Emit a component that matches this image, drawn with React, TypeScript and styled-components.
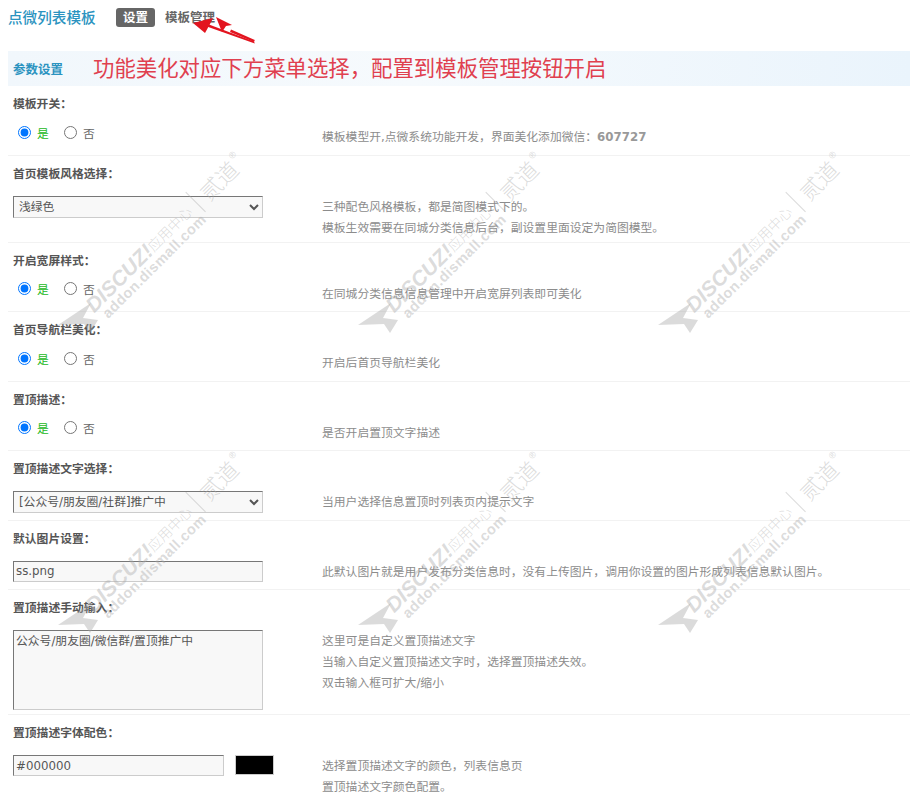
import React from "react";
import styled, { createGlobalStyle } from "styled-components";

const GlobalStyle = createGlobalStyle`
    html, body {
        margin: 0;
        padding: 0;
        background: #fff;
        overflow: hidden;
    }
    body {
        font-family: "DejaVu Sans", "Noto Sans CJK SC", sans-serif;
        font-size: 11.8px;
        color: #555;
    }
`

const Page = styled.div`
    position: relative;
    width: 910px;
    height: 795px;
    overflow: hidden;
    padding-left: 8px;
    box-sizing: border-box;
`

const Header = styled.div`
    height: 51px;
    display: flex;
    align-items: flex-start;
    padding-top: 8px;
    box-sizing: border-box;
`

const PageTitle = styled.h1`
    margin: 0 20px 0 0;
    font-size: 14.6px;
    line-height: 20px;
    font-weight: 500;
    color: #2b93c0;
    width: 88px;
    white-space: nowrap;
`

const Tab = styled.a<{ $active?: boolean }>`
    display: block;
    height: 19px;
    line-height: 19px;
    padding: 0 7px;
    margin-right: 3px;
    border-radius: 3px;
    font-size: 12.5px;
    font-weight: bold;
    color: ${props => (props.$active ? "#fff" : "#666")};
    background: ${props => (props.$active ? "#666" : "transparent")};
`

const SectionBar = styled.div`
    height: 35px;
    display: flex;
    align-items: center;
    padding-left: 5px;
    background: linear-gradient(90deg, #f1f7fc 0%, #f6fafd 45%, #eaf4fc 100%);
`

const SectionTitle = styled.span`
    width: 80px;
    font-size: 12.5px;
    font-weight: bold;
    color: #2b93c0;
`

const Notice = styled.span`
    font-size: 21.4px;
    line-height: 30px;
    color: #e0404f;
    white-space: nowrap;
`

const Row = styled.div`
    min-height: 69.5px;
    padding: 0 0 4px 5px;
    box-sizing: border-box;
    border-bottom: 1px solid #f2f2f2;
`

const Label = styled.div`
    height: 34px;
    line-height: 36px;
    font-weight: bold;
    color: #555;
`

const Body = styled.div`
    display: grid;
    grid-template-columns: 309px 1fr;
`

const Control = styled.div<{ $pad?: number }>`
    display: flex;
    align-items: flex-start;
    padding-top: ${props => props.$pad ?? 6}px;
`

const Desc = styled.div`
    padding-top: 7px;
    margin-bottom: -1px;
    line-height: 21px;
    color: #8c8c8c;
    white-space: nowrap;
`

const Strong = styled.b`
    font-weight: bold;
    color: #999;
`

const RadioGroup = styled.div`
    display: flex;
    align-items: center;
    height: 24px;
    padding-left: 5px;
`

const RadioLabel = styled.label<{ $green?: boolean }>`
    display: flex;
    align-items: center;
    width: 46px;
    font-size: 11.8px;
    color: ${props => (props.$green ? "#22b822" : "#666")};
`

const Radio = styled.input`
    width: 13px;
    height: 13px;
    margin: 0 6px 0 0;
`

const fieldBorder = `
    border-width: 1px;
    border-style: solid;
    border-color: #777 #ccc #ccc #777;
    background-color: #f8f8f8;
    box-sizing: border-box;
    font-family: "DejaVu Sans", "Noto Sans CJK SC", sans-serif;
    font-size: 11.8px;
    color: #555;
    outline: none;
`

const Select = styled.select`
    ${fieldBorder}
    width: 250px;
    height: 22px;
    padding-left: 1px;
`

const TextInput = styled.input<{ $width?: number }>`
    ${fieldBorder}
    width: ${props => props.$width ?? 250}px;
    height: 21px;
    padding: 0 2px;
`

const TextArea = styled.textarea`
    ${fieldBorder}
    display: block;
    width: 250px;
    height: 80px;
    padding: 2px;
    resize: none;
    line-height: 16px;
`

const Swatch = styled.div`
    width: 39px;
    height: 20px;
    margin-left: 11px;
    background: #000;
    border: 1px solid #ccc;
    box-sizing: border-box;
`

const Annotation = styled.svg`
    position: absolute;
    left: 180px;
    top: 8px;
`

const WatermarkLayer = styled.div`
    position: absolute;
    left: 58px;
    top: 150px;
    display: grid;
    grid-template-columns: repeat(3, 300px);
    grid-auto-rows: 300px;
    pointer-events: none;
`

const Tile = styled.div`
    position: relative;
    color: rgba(170, 170, 170, 0.42);
`

const TileIcon = styled.svg`
    position: absolute;
    left: 0;
    top: 150px;
`

const TileText = styled.div`
    position: absolute;
    left: 22px;
    top: 145px;
    transform: rotate(-45deg);
    transform-origin: 0 0;
    white-space: nowrap;
`

const BrandLine = styled.div`
    display: flex;
    align-items: center;
    height: 24px;
    margin-top: 4px;
`

const BrandName = styled.span`
    font-family: "Liberation Sans", sans-serif;
    font-size: 21px;
    font-style: italic;
    font-weight: bold;
    margin-left: -3px;
`

const BrandSub = styled.span`
    font-family: "Noto Sans CJK SC", sans-serif;
    font-size: 14px;
    font-weight: 300;
`

const BrandDivider = styled.span`
    width: 1px;
    height: 28px;
    margin: 0 9px;
    background: currentColor;
`

const BrandMark = styled.span`
    font-family: "Noto Sans CJK SC", sans-serif;
    font-size: 22px;
    font-weight: 300;
`

const Registered = styled.sup`
    font-size: 9px;
    align-self: flex-start;
    margin-left: 1px;
`

const Domain = styled.div`
    font-family: "Liberation Sans", sans-serif;
    font-size: 14.5px;
    font-weight: bold;
    letter-spacing: 0.5px;
    line-height: 17px;
    padding-left: 3px;
    margin-top: -4px;
`

const SettingRow = (props: { label: string; control: React.ReactNode; pad?: number; desc: React.ReactNode }) => {
    return (
        <Row>
            <Label>{props.label}</Label>
            <Body>
                <Control $pad={props.pad}>{props.control}</Control>
                <Desc>{props.desc}</Desc>
            </Body>
        </Row>
    );
}

const YesNo = (props: { name: string }) => {
    return (
        <RadioGroup>
            <RadioLabel $green>
                <Radio type="radio" name={props.name} defaultChecked />是
            </RadioLabel>
            <RadioLabel>
                <Radio type="radio" name={props.name} />否
            </RadioLabel>
        </RadioGroup>
    );
}

const Watermark = () => {
    return (
        <Tile>
            <TileIcon width="42" height="34" viewBox="0 0 42 34">
                <path d="M0 25 L33 3 L25 18 L40 20 L32 33 L26 24 Z" fill="currentColor" />
            </TileIcon>
            <TileText>
                <BrandLine>
                    <BrandName>DISCUZ!</BrandName>
                    <BrandSub>应用中心</BrandSub>
                    <BrandDivider />
                    <BrandMark>贰道</BrandMark>
                    <Registered>®</Registered>
                </BrandLine>
                <Domain>addon.dismall.com</Domain>
            </TileText>
        </Tile>
    );
}

const App = () => {
    return (
        <Page>
            <GlobalStyle />
            <Header>
                <PageTitle>点微列表模板</PageTitle>
                <Tab $active>设置</Tab>
                <Tab>模板管理</Tab>
            </Header>
            <SectionBar>
                <SectionTitle>参数设置</SectionTitle>
                <Notice>功能美化对应下方菜单选择&#xFF0C;配置到模板管理按钮开启</Notice>
            </SectionBar>

            <SettingRow
                label="模板开关&#xFF1A;"
                pad={0}
                control={<YesNo name="tpl" />}
                desc={<>模板模型开,点微系统功能开发&#xFF0C;界面美化添加微信&#xFF1A;<Strong>607727</Strong></>}
            />
            <SettingRow
                label="首页模板风格选择&#xFF1A;"
                control={<Select defaultValue="green"><option value="green">浅绿色</option></Select>}
                desc={<>三种配色风格模板&#xFF0C;都是简图模式下的。<br />模板生效需要在同城分类信息后台&#xFF0C;副设置里面设定为简图模型。</>}
            />
            <SettingRow
                label="开启宽屏样式&#xFF1A;"
                pad={0}
                control={<YesNo name="wide" />}
                desc="在同城分类信息信息管理中开启宽屏列表即可美化"
            />
            <SettingRow
                label="首页导航栏美化&#xFF1A;"
                pad={0}
                control={<YesNo name="nav" />}
                desc="开启后首页导航栏美化"
            />
            <SettingRow
                label="置顶描述&#xFF1A;"
                pad={0}
                control={<YesNo name="top" />}
                desc="是否开启置顶文字描述"
            />
            <SettingRow
                label="置顶描述文字选择&#xFF1A;"
                control={<Select defaultValue="a"><option value="a">[公众号/朋友圈/社群]推广中</option></Select>}
                desc="当用户选择信息置顶时列表页内提示文字"
            />
            <SettingRow
                label="默认图片设置&#xFF1A;"
                control={<TextInput defaultValue="ss.png" />}
                desc="此默认图片就是用户发布分类信息时&#xFF0C;没有上传图片&#xFF0C;调用你设置的图片形成列表信息默认图片。"
            />
            <SettingRow
                label="置顶描述手动输入&#xFF1A;"
                control={<TextArea defaultValue="公众号/朋友圈/微信群/置顶推广中" />}
                desc={<>这里可是自定义置顶描述文字<br />当输入自定义置顶描述文字时&#xFF0C;选择置顶描述失效。<br />双击输入框可扩大/缩小</>}
            />
            <SettingRow
                label="置顶描述字体配色&#xFF1A;"
                control={<><TextInput $width={211} defaultValue="#000000" /><Swatch /></>}
                desc={<>选择置顶描述文字的颜色&#xFF0C;列表信息页<br />置顶描述文字颜色配置。</>}
            />

            <WatermarkLayer>
                {Array.from({ length: 6 }, (_, i) => <Watermark key={i} />)}
            </WatermarkLayer>

            <Annotation width="80" height="40" viewBox="0 0 80 40">
                <g fill="#e3141f">
                    <path d="M74 33.5 L74.8 35.5 L24 17.5 L25 15 Z" />
                    <path d="M13 15 L33 10 L30 16 L25 25 Z" />
                    <path d="M74 34 L50 24 L51 21.5 L74.8 32 Z" />
                    <path d="M36 9 L52 17 L46 18 L42 24 Z" />
                </g>
            </Annotation>
        </Page>
    );
}

export default App;
